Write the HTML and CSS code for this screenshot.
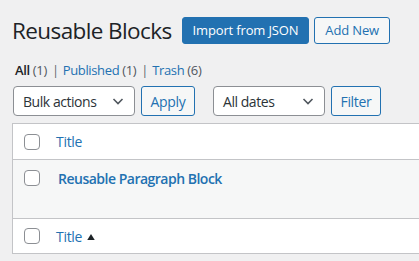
FILE: index.html
```html
<!DOCTYPE html>
<html lang="en">
<head>
    <meta charset="UTF-8">
    <meta name="viewport" content="width=device-width, initial-scale=1.0">
    <title>Reusable Blocks</title>
    <link rel="stylesheet" href="styles.css">
</head>
<body>
    <div class="wrap">
        <div class="title-bar">
            <h1>Reusable Blocks</h1>
            <a class="button primary" href="#">Import from JSON</a>
            <a class="button secondary" href="#">Add New</a>
        </div>

        <ul class="subsubsub">
            <li><a class="current" href="#">All <span class="count">(1)</span></a> |</li>
            <li><a href="#">Published <span class="count">(1)</span></a> |</li>
            <li><a href="#">Trash <span class="count">(6)</span></a></li>
        </ul>

        <div class="tablenav">
            <div class="select-box bulk">Bulk actions
                <svg viewBox="0 0 16 16" width="16" height="16"><path d="M3.5 6 8 10.5 12.5 6" fill="none" stroke="#50575e" stroke-width="1.6"/></svg>
            </div>
            <a class="button secondary small apply" href="#">Apply</a>
            <div class="select-box dates">All dates
                <svg viewBox="0 0 16 16" width="16" height="16"><path d="M3.5 6 8 10.5 12.5 6" fill="none" stroke="#50575e" stroke-width="1.6"/></svg>
            </div>
            <a class="button secondary small filter" href="#">Filter</a>
        </div>

        <table class="list-table">
            <thead>
                <tr>
                    <td class="check"><span class="checkbox"></span></td>
                    <th><a href="#">Title</a></th>
                </tr>
            </thead>
            <tbody>
                <tr class="alt">
                    <td class="check"><span class="checkbox"></span></td>
                    <td class="row-title"><a href="#">Reusable Paragraph Block</a></td>
                </tr>
            </tbody>
            <tfoot>
                <tr>
                    <td class="check"><span class="checkbox"></span></td>
                    <th><a href="#">Title <svg class="arrow" viewBox="0 0 10 8" width="8" height="6"><path d="M5 0 10 8H0z" fill="#1d2327"/></svg></a></th>
                </tr>
            </tfoot>
        </table>
    </div>
</body>
</html>
```

FILE: styles.css
```css
html, body {
    margin: 0;
    padding: 0;
    overflow: hidden;
}
body {
    background: #f0f0f1;
    color: #3c434a;
    font-family: "Open Sans", "Noto Sans", sans-serif;
    font-size: 13px;
}
a {
    color: #2271b1;
    text-decoration: none;
}
.wrap {
    padding: 13px 0 0 12px;
}
.title-bar {
    display: flex;
    align-items: center;
    height: 34px;
}
h1 {
    margin: 0 10px 0 0;
    font-size: 22.5px;
    font-weight: 400;
    color: #1d2327;
    letter-spacing: -0.6px;
}
.button {
    display: inline-flex;
    align-items: center;
    justify-content: center;
    box-sizing: border-box;
    height: 27px;
    padding: 0 10px;
    border: 1px solid #2271b1;
    border-radius: 3px;
    font-size: 13px;
    font-weight: 500;
    letter-spacing: -0.15px;
}
.primary {
    background: #2271b1;
    color: #fff;
    margin-right: 5px;
}
.secondary {
    background: #f6f7f7;
    color: #2271b1;
}
.subsubsub {
    list-style: none;
    display: flex;
    gap: 4px;
    margin: 14px 0 0 3px;
    padding: 0;
    color: #646970;
    letter-spacing: -0.35px;
}
.subsubsub li {
    display: flex;
    gap: 5px;
}
.subsubsub a.current {
    color: #1d2327;
    font-weight: 600;
}
.subsubsub .count {
    color: #50575e;
    font-weight: 400;
}
.tablenav {
    display: flex;
    align-items: center;
    gap: 6px;
    margin: 7px 0 0 1px;
    height: 30px;
}
.select-box {
    display: flex;
    align-items: center;
    justify-content: space-between;
    box-sizing: border-box;
    height: 30px;
    padding: 0 8px 0 9px;
    border: 1px solid #8c8f94;
    border-radius: 4px;
    background: #fff;
    color: #2c3338;
    font-size: 14px;
    letter-spacing: -0.45px;
}
.bulk {
    width: 122px;
}
.dates {
    width: 112px;
    margin-left: 12px;
}
.small {
    height: 30px;
    padding: 0;
    font-weight: 400;
    font-size: 14px;
    letter-spacing: -0.3px;
}
.apply {
    width: 54px;
}
.filter {
    width: 50px;
}
.list-table {
    margin-top: 7px;
    width: 600px;
    border-collapse: collapse;
    background: #fff;
    border: 1px solid #c3c4c7;
}
.list-table td, .list-table th {
    text-align: left;
    font-weight: 400;
    font-size: 14px;
    vertical-align: middle;
    letter-spacing: -0.3px;
}
.list-table thead tr {
    height: 36px;
    border-bottom: 1px solid #c3c4c7;
}
.list-table tfoot tr {
    height: 35px;
    border-top: 1px solid #c3c4c7;
}
.list-table .alt {
    background: #f6f7f7;
    height: 59px;
}
.alt td {
    vertical-align: top;
    padding-top: 9px;
}
.check {
    width: 30px;
    padding-left: 11px;
}
.checkbox {
    display: block;
    width: 14px;
    height: 14px;
    border: 1px solid #8c8f94;
    border-radius: 4px;
    background: #fff;
}
.alt .check .checkbox {
    margin-top: 1px;
}
.row-title a {
    font-weight: 600;
    font-size: 14px;
    padding-left: 2px;
    letter-spacing: -0.5px;
}
.arrow {
    margin-left: 2px;
    vertical-align: 2px;
}
```
